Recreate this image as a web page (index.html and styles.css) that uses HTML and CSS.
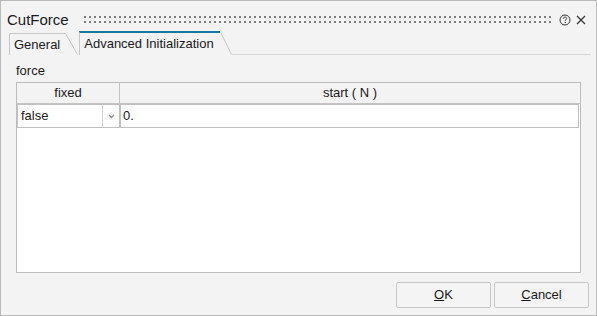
FILE: index.html
```html
<!DOCTYPE html>
<html lang="en">
<head>
  <meta charset="UTF-8">
  <title>CutForce</title>
  <link rel="stylesheet" href="styles.css">
</head>
<body>

<div class="dialog">

  <!-- Title bar -->
  <div class="titlebar">
    <span class="title">CutForce</span>
    <div class="grip"></div>
    <svg class="help" width="12" height="12" viewBox="0 0 12 12">
      <circle cx="6" cy="6" r="5" fill="none" stroke="#333" stroke-width="1"/>
      <path d="M4.3 4.7 C4.3 3.6 5 3.1 6 3.1 C7 3.1 7.7 3.7 7.7 4.5 C7.7 5.4 6.9 5.6 6.3 6.2 L6.3 6.9" fill="none" stroke="#333" stroke-width="1"/>
      <rect x="5.7" y="7.9" width="1.2" height="1.2" fill="#333"/>
    </svg>
    <svg class="close" width="10" height="10" viewBox="0 0 10 10">
      <path d="M1 1 L9 9 M9 1 L1 9" stroke="#333" stroke-width="1.2"/>
    </svg>
  </div>

  <!-- Tabs -->
  <div class="tabs">
    <div class="tab">General</div>
    <svg class="slant" width="13" height="22" viewBox="0 0 13 22">
      <path d="M0.5 0.5 L12.5 21.5" stroke="#c6c6c6" stroke-width="1"/>
    </svg>
    <div class="tab active">Advanced Initialization</div>
    <svg class="slant" width="12" height="24" viewBox="0 0 12 24">
      <path d="M0.5 1 L11.5 23.5" stroke="#c6c6c6" stroke-width="1"/>
    </svg>
    <div class="tab-line"></div>
  </div>

  <!-- Page -->
  <div class="page">
    <div class="label">force</div>
    <div class="grid">
      <div class="grid-head">
        <div class="col-fixed">fixed</div>
        <div class="col-start">start ( N )</div>
      </div>
      <div class="grid-row">
        <div class="combo">
          <span class="combo-text">false</span>
          <span class="combo-arrow">
            <svg width="7" height="5" viewBox="0 0 7 5">
              <path d="M1 1 L3.5 3.5 L6 1" fill="none" stroke="#8f8f8f" stroke-width="1.3"/>
            </svg>
          </span>
        </div>
        <div class="value">0.</div>
      </div>
    </div>
  </div>

  <!-- Buttons -->
  <div class="buttons">
    <div class="btn"><u>O</u>K</div>
    <div class="btn"><u>C</u>ancel</div>
  </div>

</div>

</body>
</html>
```

FILE: styles.css
```css
html, body {
  margin: 0;
  padding: 0;
  background-color: #f3f3f3;
  font-family: "Liberation Sans", Arial, sans-serif;
  font-size: 13px;
  color: #1a1a1a;
}

.dialog {
  width: 597px;
  height: 316px;
  box-sizing: border-box;
  border: 1px solid #b9b9b9;
  background: #f3f3f3;
  display: flex;
  flex-direction: column;
}

/* title bar */
.titlebar {
  height: 30px;
  box-sizing: border-box;
  padding: 7px 0 0 6px;
  display: flex;
  align-items: center;
}

.title {
  font-size: 15px;
  line-height: 17px;
}

.grip {
  flex: 1;
  height: 7px;
  margin: 0 7px 0 15px;
  background-image:
    linear-gradient(90deg, transparent 2px, #f3f3f3 2px),
    linear-gradient(#7d7d7d 2px, transparent 2px);
  background-size: 5px 5px;
}

.help {
  display: block;
}

.close {
  display: block;
  margin: 0 10px 0 5px;
}

/* tabs */
.tabs {
  height: 24px;
  display: flex;
  align-items: flex-end;
  padding-left: 8px;
}

.tab {
  box-sizing: border-box;
  height: 22px;
  line-height: 15px;
  border-top: 1px solid #c6c6c6;
  border-left: 1px solid #c6c6c6;
  padding: 3px 5px 0 4px;
  white-space: nowrap;
}

.tab.active {
  height: 24px;
  margin-left: 1px;
  border-top: 2px solid #1677a6;
  padding: 3px 6px 0 4px;
}

.slant {
  display: block;
}

.tab-line {
  flex: 1;
  height: 24px;
  box-sizing: border-box;
  border-bottom: 1px solid #d6d6d6;
  margin-right: 5px;
}

/* page */
.page {
  flex: 1;
  display: flex;
  flex-direction: column;
  padding: 8px 15px 0 15px;
}

.label {
  line-height: 15px;
  margin-bottom: 4px;
}

.grid {
  flex: 1;
  border: 1px solid #bdbdbd;
  background: #fff;
}

.grid-head {
  display: flex;
  height: 21px;
  box-sizing: border-box;
  border-bottom: 1px solid #c4c4c4;
  background: #f3f3f3;
  line-height: 15px;
}

.col-fixed {
  width: 103px;
  box-sizing: border-box;
  border-right: 1px solid #c4c4c4;
  text-align: center;
  padding-top: 2px;
}

.col-start {
  flex: 1;
  text-align: center;
  padding-top: 2px;
}

.grid-row {
  display: flex;
  height: 24px;
}

.combo {
  width: 103px;
  box-sizing: border-box;
  border: 1px solid #c2c2c2;
  display: flex;
}

.combo-text {
  flex: 1;
  padding: 3px 0 0 3px;
  line-height: 15px;
}

.combo-arrow {
  width: 16px;
  border-left: 1px solid #d0d0d0;
  display: flex;
  align-items: center;
  justify-content: center;
}

.value {
  flex: 1;
  box-sizing: border-box;
  border: 1px solid #c2c2c2;
  margin-right: 1px;
  padding: 3px 0 0 2px;
  line-height: 15px;
}

/* buttons */
.buttons {
  display: flex;
  justify-content: flex-end;
  gap: 3px;
  padding: 9px 7px 7px 0;
}

.btn {
  width: 95px;
  height: 26px;
  box-sizing: border-box;
  border: 1px solid #c6c6c6;
  border-radius: 2px;
  background: #f4f4f4;
  display: flex;
  align-items: center;
  justify-content: center;
  padding-bottom: 1px;
}

.btn u {
  text-underline-offset: 1px;
}
```
